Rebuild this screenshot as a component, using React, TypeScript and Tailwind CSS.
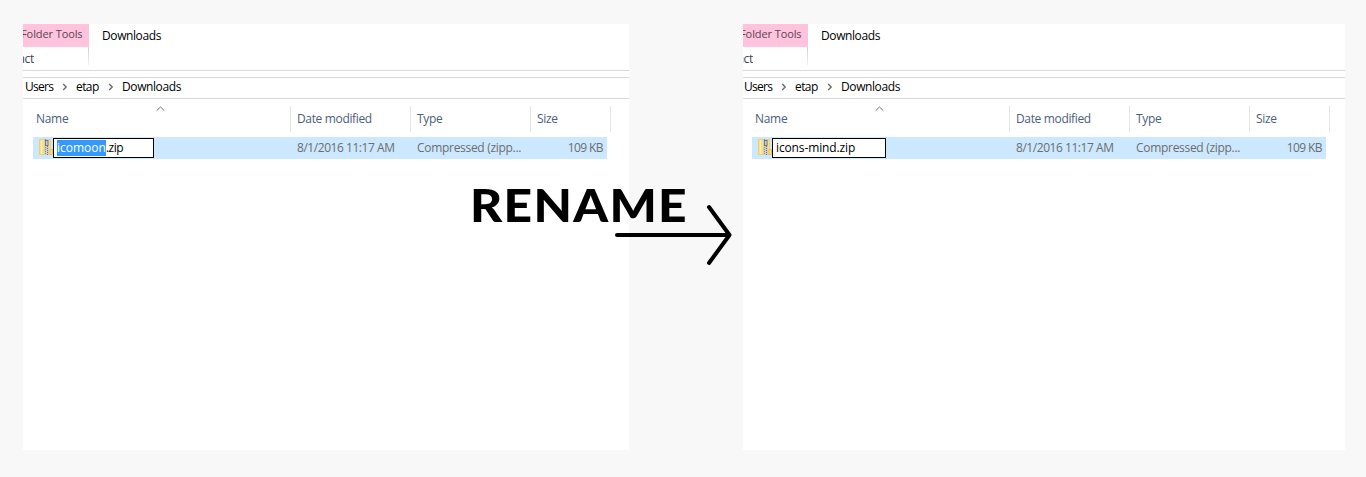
import { ReactNode } from "react";

function ZipIcon() {
  return (
    <svg width="14" height="17" viewBox="0 0 14 17" className="block shrink-0">
      <path d="M0.5 0.5H11.5V15.5H0.5Z" fill="#fbe08a" stroke="#f0cf74" />
      <path d="M2.5 1V15" stroke="#fff0b8" />
      <path d="M11 10.5H13.5V15.5H11Z" fill="#fbe08a" stroke="#e5bd55" />
      <rect x="5" y="0" width="5" height="16" fill="#d3cfc0" />
      <path d="M6.5 0V16" stroke="#8d8b82" strokeDasharray="1 1" />
      <path d="M8.5 1V16" stroke="#77756c" strokeDasharray="1 1" />
      <rect x="6.4" y="1.4" width="2.6" height="5" fill="#c9cbce" stroke="#66696e" strokeWidth="0.8" />
    </svg>
  );
}

function Chevron() {
  return (
    <svg width="6" height="8" viewBox="0 0 6 8" className="-mt-[2px] block shrink-0">
      <path d="M1.2 1L4.2 4L1.2 7" fill="none" stroke="#6c6c6c" strokeWidth="1.4" />
    </svg>
  );
}

type PanelProps = {
  width: string;
  shift: string;
  field: string;
  children: ReactNode;
};

function Panel({ width, shift, field, children }: PanelProps) {
  return (
    <section className={`h-[426px] shrink-0 overflow-hidden bg-white ${width}`}>
      <div className={`w-[608px] ${shift}`}>
        <div className="flex h-[46px] items-start">
          <div className="w-[66px] shrink-0">
            <div className="flex h-[23px] justify-end overflow-hidden bg-[#ffc3dd] pr-[6.5px] text-[11px] leading-[20px] tracking-[-0.1px] text-[#5a4550]">
              <span className="whitespace-nowrap">Folder Tools</span>
            </div>
            <div className="flex h-[23px]">
              <div className="flex w-[11px] justify-end overflow-hidden leading-[24px]">
                <span className="text-[#3f3f4f]">act</span>
              </div>
              <div className="ml-auto h-[18px] w-px bg-gradient-to-b from-[#cfcfcf] to-[#f0f0f0]" />
            </div>
          </div>
          <span className="ml-[13px] leading-[24px] tracking-[-0.4px]">Downloads</span>
        </div>
        <div className="h-[8px] border-y border-[#d9d9d9]" />
        <nav className="flex h-[21px] items-center border-b border-[#d9d9d9] pl-[2px] leading-[20px]">
          <span className="-mt-[2px] w-[37px] tracking-[-0.7px]">Users</span>
          <Chevron />
          <span className="-mt-[2px] ml-[8px] w-[32px] tracking-[-0.6px]">etap</span>
          <Chevron />
          <span className="-mt-[2px] ml-[8px] tracking-[-0.4px]">Downloads</span>
        </nav>
        <div className="flex h-[38px] items-start pt-[7px] leading-[26px] text-[#4c607a]">
          <div className="flex h-[26px] w-[268px] justify-between border-r border-[#e5e5e5] pl-[13px]">
            <span>Name</span>
            <svg width="9" height="6" viewBox="0 0 9 6" className="mr-[125px] block">
              <path d="M0.7 4.7L4.5 1L8.3 4.7" fill="none" stroke="#6d6d6d" />
            </svg>
          </div>
          <div className="h-[26px] w-[120px] border-r border-[#e5e5e5] pl-[6px] tracking-[-0.35px]">Date modified</div>
          <div className="h-[26px] w-[120px] border-r border-[#e5e5e5] pl-[6px]">Type</div>
          <div className="h-[26px] w-[80px] border-r border-[#e5e5e5] pl-[6px]">Size</div>
        </div>
        <div className="ml-[10px] flex h-[22px] w-[574px] bg-[#cce8ff] leading-[22px] text-[#6d6d6d]">
          <div className="flex w-[264px] pt-px pl-[6px]">
            <div className="pt-px">
              <ZipIcon />
            </div>
            <div
              className={`flex h-[20px] items-center border border-black bg-white pl-[3px] tracking-[0px] text-black ${field}`}
            >
              {children}
            </div>
          </div>
          <div className="w-[120px] tracking-[-0.45px]">8/1/2016 11:17 AM</div>
          <div className="w-[120px]">Compressed (zipp...</div>
          <div className="flex-1 pr-[4px] text-right tracking-[-0.6px]">109 KB</div>
        </div>
      </div>
    </section>
  );
}

export default function App() {
  return (
    <main className="relative flex h-[477px] w-[1366px] gap-[114px] overflow-hidden bg-[#f8f8f8] pt-[24px] pl-[23px] font-['Open_Sans','Noto_Sans',sans-serif] text-[12px] tracking-[-0.3px] whitespace-nowrap text-black">
      <Panel width="w-[606px]" shift="ml-0" field="w-[101px]">
        <span className="h-[16px] bg-[#3399ff] leading-[16px] text-white">icomoon</span>
        <span className="leading-[16px] tracking-[-0.5px]">.zip</span>
      </Panel>
      <Panel width="w-[602px]" shift="-ml-px" field="w-[114px]">
        <span className="leading-[16px] tracking-[-0.13px]">icons-mind.zip</span>
      </Panel>
      <div className="absolute top-[176px] left-[469.5px] origin-left scale-x-[1.07] font-['Lato',sans-serif] text-[46.5px] leading-[56px] font-black tracking-[1.2px]">
        RENAME
      </div>
      <svg width="120" height="64" viewBox="0 0 120 64" className="absolute top-[203px] left-[613px]">
        <path
          d="M4 32H116M96 4L116.5 32L96 60"
          fill="none"
          stroke="#000"
          strokeWidth="4"
          strokeLinecap="round"
          strokeLinejoin="round"
        />
      </svg>
    </main>
  );
}
